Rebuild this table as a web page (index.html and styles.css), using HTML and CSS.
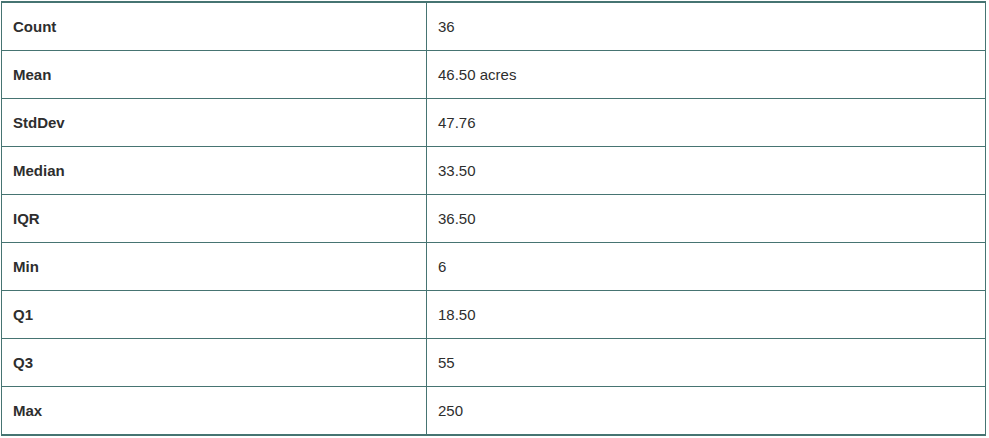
FILE: index.html
```html
<!DOCTYPE html>
<html>
<head>
<meta charset="utf-8">
<link rel="stylesheet" href="styles.css">
</head>
<body>
<div class="wrap">
<table class="stats">
<tbody>
<tr><th>Count</th><td>36</td></tr>
<tr><th>Mean</th><td>46.50 acres</td></tr>
<tr><th>StdDev</th><td>47.76</td></tr>
<tr><th>Median</th><td>33.50</td></tr>
<tr><th>IQR</th><td>36.50</td></tr>
<tr><th>Min</th><td>6</td></tr>
<tr><th>Q1</th><td>18.50</td></tr>
<tr><th>Q3</th><td>55</td></tr>
<tr class="last"><th>Max</th><td>250</td></tr>
</tbody>
</table>
</div>
</body>
</html>
```
FILE: styles.css
```css
html, body {
  margin: 0;
  padding: 0;
  background: #ffffff;
}
.wrap {
  padding: 1px 0 0 1px;
}
.stats {
  border-collapse: separate;
  border-spacing: 0;
  width: 985px;
  table-layout: fixed;
  border-top: 2px solid #467472;
  border-bottom: 2px solid #467472;
  border-left: 1px solid #467472;
  border-right: 1px solid #467472;
  font-family: "Liberation Sans", Arial, sans-serif;
  font-size: 15px;
  color: #2e2e2e;
}
.stats th, .stats td {
  padding: 0 0 0 11px;
  line-height: 47px;
  text-align: left;
  vertical-align: middle;
  border-bottom: 1px solid #467472;
}
.stats th {
  width: 413px;
  font-weight: bold;
  border-right: 1px solid #467472;
}
.stats tr.last th, .stats tr.last td {
  border-bottom: none;
}
```
